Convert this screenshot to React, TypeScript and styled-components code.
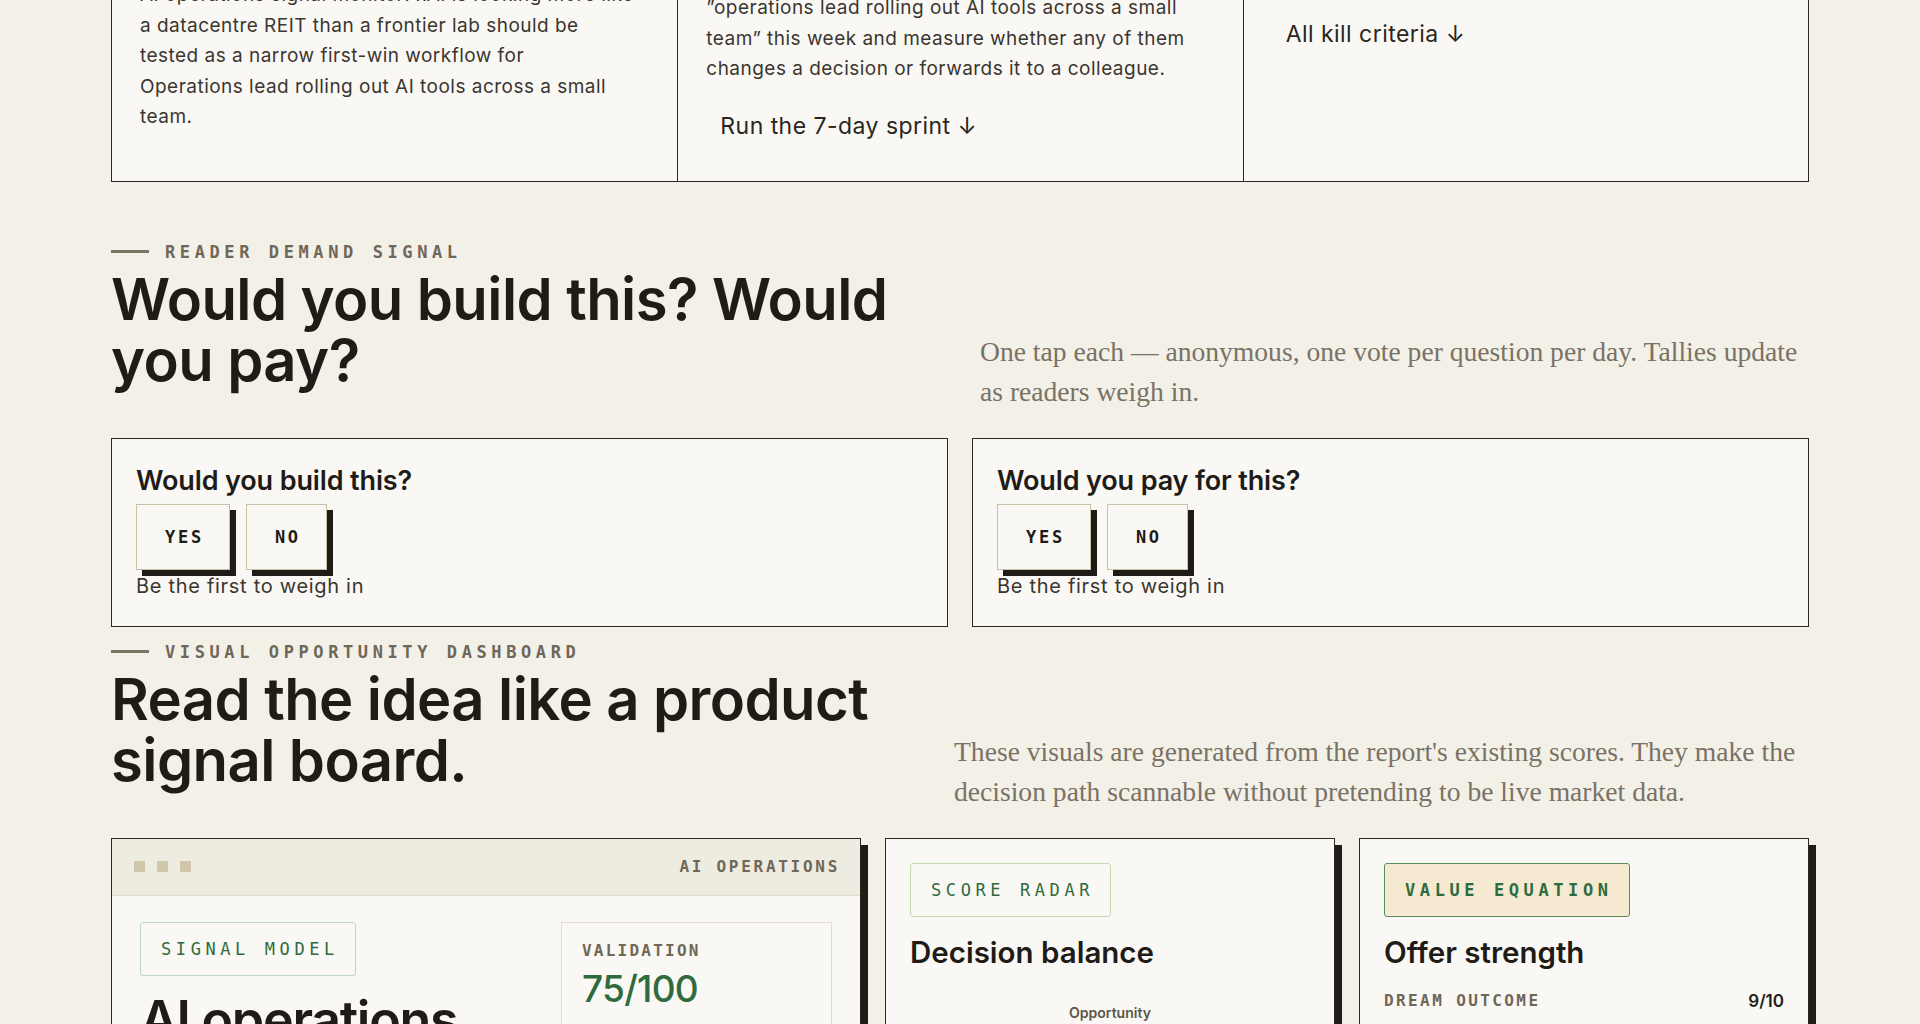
import React from 'react';
import styled, { createGlobalStyle } from 'styled-components';

const SANS = `Inter, "Noto Sans", Arial, sans-serif`;
const MONO = `"DejaVu Sans Mono", "Liberation Mono", monospace`;
const SERIF = `"Liberation Serif", "DejaVu Serif", serif`;

const INK = '#1f1c17';
const BODY = '#3a3630';
const MUTED = '#6f6757';
const GREEN = '#2f6b3f';
const PAPER = '#faf8f4';

const GlobalStyle = createGlobalStyle`
  html, body {
    margin: 0;
    padding: 0;
    background: #f3f0e8;
    overflow: hidden;
  }
  body {
    font-family: ${SANS};
    color: ${INK};
  }
  *, *::before, *::after {
    box-sizing: border-box;
  }
`;

const Page = styled.main`
  max-width: 1698px;
  margin: 0 auto;
`;

/* summary strip, scrolled half out of view */
const Summary = styled.section`
  display: grid;
  grid-template-columns: repeat(3, 1fr);
  margin-top: -149.7px;
  border: 1.5px solid #2a2620;
  background: ${PAPER};
`;

const SummaryCell = styled.article`
  padding: 28px;
  & + & {
    border-left: 1.5px solid #2a2620;
  }
`;

const Kicker = styled.div`
  font: 600 13px/20px ${MONO};
  letter-spacing: 0.2em;
  text-transform: uppercase;
  color: ${MUTED};
  margin-bottom: 10px;
`;

const CellTitle = styled.h3`
  margin: 0;
  font: 600 24px/30px ${SANS};
  letter-spacing: -0.01em;
`;

const CellText = styled.p<{ $lead: number }>`
  margin: ${(p) => p.$lead}px 0 0;
  font: 400 19px/30.6px ${SANS};
  letter-spacing: 0.025em;
  color: ${BODY};
  white-space: nowrap;
`;

const CellLink = styled.a`
  display: inline-block;
  margin-top: 14px;
  padding: 12px 14px;
  font: 400 23px/30px ${SANS};
  letter-spacing: 0.02em;
  color: #2a2620;
  text-decoration: none;
`;

/* section header */
const Section = styled.section<{ $space: number }>`
  margin-top: ${(p) => p.$space}px;
`;

const SectionHead = styled.header<{ $main: number }>`
  display: grid;
  grid-template-columns: ${(p) => p.$main}px 1fr;
  column-gap: 40px;
  align-items: end;
  margin-bottom: 26px;
`;

const Eyebrow = styled.div`
  display: flex;
  align-items: center;
  gap: 16px;
  margin-bottom: 7px;
  font: 700 17px/20px ${MONO};
  letter-spacing: 4.6px;
  text-transform: uppercase;
  color: ${MUTED};
  &::before {
    content: '';
    width: 38px;
    height: 3px;
    background: #7a7263;
  }
`;

const Heading = styled.h2`
  margin: 0 0 21px;
  font: 600 58px/61px ${SANS};
  letter-spacing: -0.01em;
  color: ${INK};
`;

const Lede = styled.p`
  margin: 0;
  font: 400 27.6px/40px ${SERIF};
  color: #7a7264;
  white-space: nowrap;
`;

/* reader votes */
const VoteGrid = styled.div`
  display: grid;
  grid-template-columns: 1fr 1fr;
  gap: 24px;
`;

const VoteCard = styled.div`
  display: flex;
  flex-direction: column;
  align-items: flex-start;
  padding: 26px 24px 28px;
  border: 1.5px solid #2a2620;
  background: ${PAPER};
`;

const VoteQuestion = styled.h3`
  margin: 0 0 7px;
  font: 600 27px/32px ${SANS};
  letter-spacing: -0.005em;
`;

const VoteButtons = styled.div`
  display: flex;
  gap: 16px;
`;

const VoteButton = styled.button`
  padding: 22px 25px 22px 28px;
  border: 1.5px solid #c9c0a8;
  background: ${PAPER};
  box-shadow: 6px 6px 0 ${INK};
  font: 700 17px/20px ${MONO};
  letter-spacing: 0.16em;
  color: ${INK};
  cursor: pointer;
`;

const VoteHint = styled.div`
  margin-top: 4px;
  font: 400 20px/24px ${SANS};
  letter-spacing: 0.035em;
  color: ${BODY};
`;

/* dashboard */
const Board = styled.div`
  display: grid;
  grid-template-columns: 5fr 3fr 3fr;
  gap: 24px;
  align-items: start;
`;

const Panel = styled.div<{ $pad?: number }>`
  border: 1.5px solid #2a2620;
  background: ${PAPER};
  box-shadow: 7px 7px 0 ${INK};
  padding: ${(p) => p.$pad ?? 0}px;
`;

const WindowBar = styled.div`
  display: flex;
  align-items: center;
  justify-content: space-between;
  height: 57px;
  padding: 0 22px;
  background: #eeebe0;
  border-bottom: 1.5px solid #e3dccb;
`;

const Dots = styled.div`
  display: flex;
  gap: 12px;
  span {
    width: 11px;
    height: 11px;
    background: #cfc6ac;
  }
`;

const BarLabel = styled.div`
  font: 600 16px/20px ${MONO};
  letter-spacing: 0.17em;
  margin-right: -2px;
  color: ${MUTED};
`;

const PanelBody = styled.div`
  display: grid;
  grid-template-columns: 1fr 271px;
  gap: 32px;
  padding: 26px 28px 28px;
`;

const Stack = styled.div`
  display: flex;
  flex-direction: column;
  align-items: flex-start;
`;

type Tone = 'teal' | 'sage' | 'cream';

const Badge = styled.span<{ $tone: Tone }>`
  display: inline-block;
  padding: 16px 16px 16px 20px;
  border: 1.5px solid
    ${(p) => (p.$tone === 'teal' ? '#bcd6cf' : p.$tone === 'sage' ? '#c5d8b5' : '#5b8c60')};
  border-radius: 3px;
  background: ${(p) => (p.$tone === 'cream' ? '#f6e9d1' : 'transparent')};
  font: ${(p) => (p.$tone === 'cream' ? 700 : 400)} 17px/20px ${MONO};
  letter-spacing: 0.27em;
  color: ${GREEN};
`;

const BigTitle = styled.h3`
  margin: 17px 0 0;
  font: 600 52px/1.05 ${SANS};
  letter-spacing: -0.025em;
`;

const PanelTitle = styled.h3`
  margin: 17px 0 0;
  font: 600 29.5px/36px ${SANS};
  letter-spacing: 0;
`;

const StatBox = styled.div`
  padding: 18px 20px;
  border: 1.5px solid #e2dccb;
`;

const StatLabel = styled.div`
  font: 700 16px/20px ${MONO};
  letter-spacing: 0.14em;
  color: ${MUTED};
`;

const StatValue = styled.div`
  margin-top: 6px;
  font: 500 37px/44px ${SANS};
  letter-spacing: -0.02em;
  color: ${GREEN};
`;

const Radar = styled.svg`
  display: block;
  width: 100%;
  margin-top: 30px;
`;

const Metric = styled.div`
  margin-top: 21px;
`;

const MetricRow = styled.div`
  display: flex;
  justify-content: space-between;
  align-items: center;
`;

const MetricName = styled.span`
  font: 700 16px/20px ${MONO};
  letter-spacing: 0.15em;
  color: ${MUTED};
`;

const MetricScore = styled.span`
  font: 600 17px/20px ${SANS};
  color: ${INK};
`;

const Track = styled.div`
  margin-top: 16px;
  height: 10px;
  background: #ebe5d6;
  div {
    height: 100%;
    background: ${GREEN};
  }
`;

const lines = (rows: string[]) =>
  rows.map((r, i) => (
    <React.Fragment key={i}>
      {i > 0 && <br />}
      {r}
    </React.Fragment>
  ));

const summary = [
  {
    kicker: 'Verdict',
    title: 'Build it narrow',
    lead: 10,
    text: [
      'Build, but narrow. The idea behind this',
      'AI operations signal monitor: xAI is looking more like',
      'a datacentre REIT than a frontier lab should be',
      'tested as a narrow first-win workflow for',
      'Operations lead rolling out AI tools across a small',
      'team.',
    ],
  },
  {
    kicker: 'First test',
    title: '7-day validation sprint',
    lead: 23,
    text: [
      'Hand-deliver five signal briefs to',
      '\u201Doperations lead rolling out AI tools across a small',
      'team\u201D this week and measure whether any of them',
      'changes a decision or forwards it to a colleague.',
    ],
    link: 'Run the 7-day sprint \u2193',
  },
  {
    kicker: 'Kill criteria',
    title: 'When to walk away',
    lead: 23,
    text: ['Stop if fewer than 2 of 5 readers act on it.'],
    link: 'All kill criteria \u2193',
  },
];

const votes = ['Would you build this?', 'Would you pay for this?'];

function radarPoints(cx: number, cy: number, r: number, values: number[]) {
  return values
    .map((v, i) => {
      const a = -Math.PI / 2 + (i * 2 * Math.PI) / values.length;
      return `${(cx + Math.cos(a) * r * v).toFixed(1)},${(cy + Math.sin(a) * r * v).toFixed(1)}`;
    })
    .join(' ');
}

export default function App() {
  return (
    <>
      <GlobalStyle />
      <Page>
        <Summary>
          {summary.map((c) => (
            <SummaryCell key={c.kicker}>
              <Kicker>{c.kicker}</Kicker>
              <CellTitle>{c.title}</CellTitle>
              <CellText $lead={c.lead}>{lines(c.text)}</CellText>
              {c.link && <CellLink href="#">{c.link}</CellLink>}
            </SummaryCell>
          ))}
        </Summary>

        <Section $space={60}>
          <SectionHead $main={829}>
            <div>
              <Eyebrow>Reader demand signal</Eyebrow>
              <Heading>Would you build this? Would you pay?</Heading>
            </div>
            <Lede>
              {lines([
                'One tap each \u2014 anonymous, one vote per question per day. Tallies update',
                'as readers weigh in.',
              ])}
            </Lede>
          </SectionHead>
          <VoteGrid>
            {votes.map((q) => (
              <VoteCard key={q}>
                <VoteQuestion>{q}</VoteQuestion>
                <VoteButtons>
                  <VoteButton>YES</VoteButton>
                  <VoteButton>NO</VoteButton>
                </VoteButtons>
                <VoteHint>Be the first to weigh in</VoteHint>
              </VoteCard>
            ))}
          </VoteGrid>
        </Section>

        <Section $space={15}>
          <SectionHead $main={803}>
            <div>
              <Eyebrow>Visual opportunity dashboard</Eyebrow>
              <Heading>Read the idea like a product signal board.</Heading>
            </div>
            <Lede>
              {lines([
                "These visuals are generated from the report's existing scores. They make the",
                'decision path scannable without pretending to be live market data.',
              ])}
            </Lede>
          </SectionHead>
          <Board>
            <Panel>
              <WindowBar>
                <Dots>
                  <span />
                  <span />
                  <span />
                </Dots>
                <BarLabel>AI OPERATIONS</BarLabel>
              </WindowBar>
              <PanelBody>
                <Stack>
                  <Badge $tone="teal">SIGNAL MODEL</Badge>
                  <BigTitle>AI operations signal monitor</BigTitle>
                </Stack>
                <StatBox>
                  <StatLabel>VALIDATION</StatLabel>
                  <StatValue>75/100</StatValue>
                </StatBox>
              </PanelBody>
            </Panel>

            <Panel $pad={24}>
              <Stack>
                <Badge $tone="sage">SCORE RADAR</Badge>
                <PanelTitle>Decision balance</PanelTitle>
              </Stack>
              <Radar viewBox="0 0 398 320">
                <text
                  x="199"
                  y="18"
                  textAnchor="middle"
                  fontFamily="Inter, sans-serif"
                  fontSize="14"
                  fontWeight="600"
                  fill="#5d5648"
                >
                  Opportunity
                </text>
                {[1, 0.66, 0.33].map((s) => (
                  <polygon
                    key={s}
                    points={radarPoints(199, 170, 130, [s, s, s, s, s])}
                    fill="none"
                    stroke="#e2dccb"
                    strokeWidth="1.5"
                  />
                ))}
                <polygon
                  points={radarPoints(199, 170, 130, [0.8, 0.7, 0.75, 0.6, 0.9])}
                  fill="rgba(47,107,63,0.15)"
                  stroke={GREEN}
                  strokeWidth="2"
                />
              </Radar>
            </Panel>

            <Panel $pad={24}>
              <Stack>
                <Badge $tone="cream">VALUE EQUATION</Badge>
                <PanelTitle>Offer strength</PanelTitle>
              </Stack>
              <Metric>
                <MetricRow>
                  <MetricName>DREAM OUTCOME</MetricName>
                  <MetricScore>9/10</MetricScore>
                </MetricRow>
                <Track>
                  <div style={{ width: '90%' }} />
                </Track>
              </Metric>
            </Panel>
          </Board>
        </Section>
      </Page>
    </>
  );
}
